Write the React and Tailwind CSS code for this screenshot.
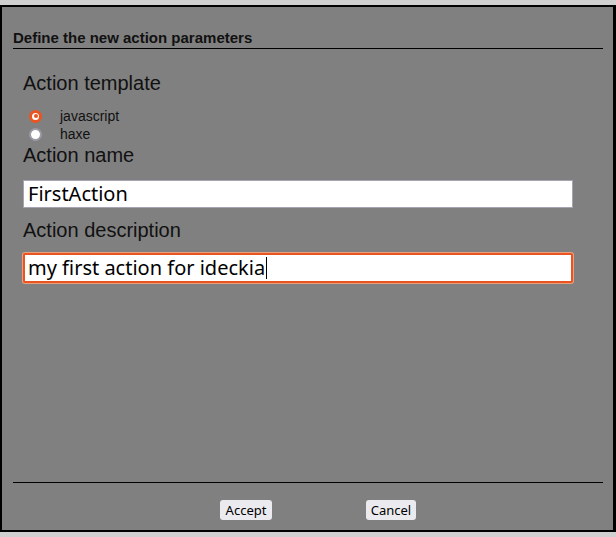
export default function App() {
  return (
    <div className="h-[537px] bg-[#d0d0d0] pt-[5px]" style={{ fontFamily: '"Liberation Sans", Arial, sans-serif' }}>
      <div className="h-[527px] border-2 border-r-[3px] border-black bg-[#808080] flex flex-col">
        <div className="pt-[22px] ml-[11px] mr-[10px] border-b border-black pb-[2px]">
          <div className="text-[15px] leading-[17px] font-bold text-[#111]">Define the new action parameters</div>
        </div>
        <div className="pl-[21px] pr-[41px] pt-[23px] flex flex-col text-[#111]">
          <div className="text-[20px] leading-[23px]">Action template</div>
          <div className="mt-[12px] flex flex-col">
            <div className="h-[18px] flex items-center">
              <div className="ml-[6px] w-[13px] h-[13px] rounded-full border-[3px] border-[#e95420] bg-white flex items-center justify-center">
                <div className="w-[4px] h-[4px] rounded-full bg-[#e95420]" />
              </div>
              <span className="ml-[18px] text-[14px] leading-[18px]">javascript</span>
            </div>
            <div className="h-[18px] flex items-center">
              <div className="ml-[6px] w-[13px] h-[13px] rounded-full border-2 border-[#9c9aa6] bg-white" />
              <span className="ml-[18px] text-[14px] leading-[18px]">haxe</span>
            </div>
          </div>
          <div className="mt-[1px] text-[20px] leading-[23px]">Action name</div>
          <div className="mt-[13px] h-[28px] w-[550px] border border-[#a6a4b0] bg-white flex items-center pl-[4px] text-[20px] text-black" style={{ fontFamily: '"Noto Sans", "Open Sans", sans-serif' }}>
            FirstAction
          </div>
          <div className="mt-[11px] text-[20px] leading-[23px]">Action description</div>
          <div className="mt-[11px] h-[30px] w-[550px] border-2 border-[#e95420] ring-1 ring-[#e8a080] rounded-[2px] bg-white flex items-center pl-[3px] text-[20px] text-black" style={{ fontFamily: '"Noto Sans", "Open Sans", sans-serif' }}>
            my first action for ideckia<span className="inline-block w-px h-[22px] bg-black ml-[1px]" />
          </div>
        </div>
        <div className="flex-1" />
        <div className="ml-[11px] mr-[10px] border-t border-black" />
        <div className="mt-[17px] mb-[10px] flex pl-[218px] gap-[94px]" style={{ fontFamily: '"Noto Sans", "Open Sans", sans-serif' }}>
          <div className="h-[20px] w-[52px] rounded-[3px] bg-[#ebebef] text-[13px] leading-[20px] text-center text-black">Accept</div>
          <div className="h-[20px] w-[50px] rounded-[3px] bg-[#ebebef] text-[13px] leading-[20px] text-center text-black">Cancel</div>
        </div>
      </div>
    </div>
  );
}
